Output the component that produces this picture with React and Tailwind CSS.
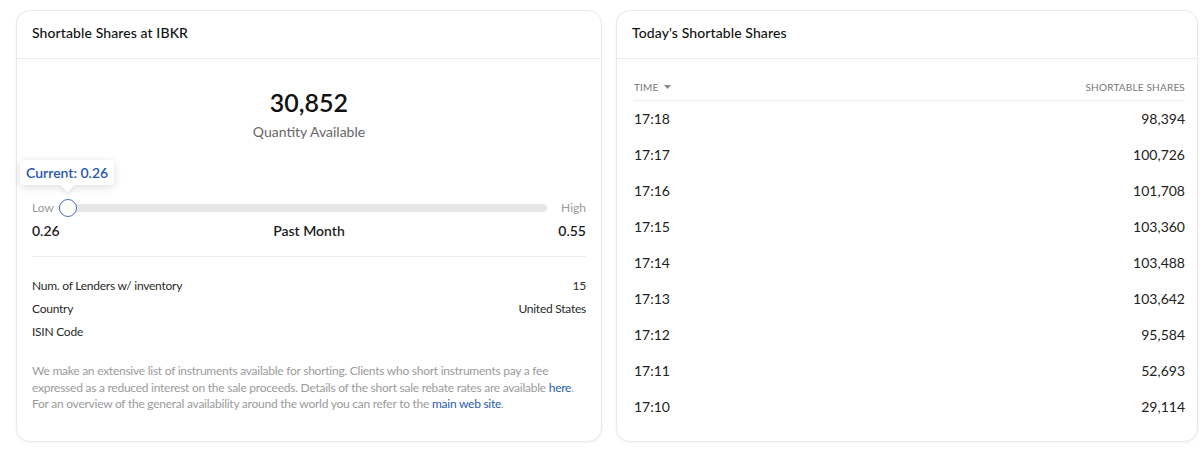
import React from "react";

const rows = [
  ["17:18", "98,394"],
  ["17:17", "100,726"],
  ["17:16", "101,708"],
  ["17:15", "103,360"],
  ["17:14", "103,488"],
  ["17:13", "103,642"],
  ["17:12", "95,584"],
  ["17:11", "52,693"],
  ["17:10", "29,114"],
];

const font = { fontFamily: "Lato, 'Open Sans', Arial, sans-serif" };

function Card({ title, className, children }) {
  return (
    <div
      className={`rounded-[14px] border border-[#e9e9e9] bg-white shadow-[0_1px_3px_rgba(0,0,0,0.05)] ${className}`}
    >
      <div className="h-[48px] border-b border-[#ececec] px-[15px] pb-[3px] flex items-center">
        <h2 className="text-[14px] font-medium text-[#111] leading-none tracking-[0.1px]">{title}</h2>
      </div>
      {children}
    </div>
  );
}

export default function App() {
  return (
    <div className="w-[1200px] h-[458px] bg-white overflow-hidden" style={font}>
      <div className="flex gap-[14px] pl-[16px] pt-[10px]">
        {/* availability card */}
        <Card title="Shortable Shares at IBKR" className="w-[586px] h-[432px]">
          <div className="px-[15px]">
            <div className="flex flex-col items-center pt-[28px]">
              <div className="text-[25px] font-semibold text-[#111] leading-[30px]">30,852</div>
              <div className="text-[14px] text-[#666] mt-[6px] leading-[18px]">Quantity Available</div>
            </div>

            {/* range slider with current-value tooltip */}
            <div className="relative mt-[58px]">
              <div className="absolute left-[-12px] top-[-39px] rounded-[4px] bg-white px-[6px] h-[25px] flex items-center shadow-[0_2px_8px_rgba(0,0,0,0.14)]">
                <span className="text-[14px] font-semibold text-[#1f57ad]">Current: 0.26</span>
                <span className="absolute left-[42px] bottom-[-5px] w-[11px] h-[11px] bg-white rotate-45 shadow-[3px_3px_4px_rgba(0,0,0,0.06)]"></span>
              </div>
              <div className="flex items-center h-[18px]">
                <span className="text-[12px] text-[#9a9a9a] w-[27px]">Low</span>
                <div className="relative flex-1 h-[8px] rounded-full bg-[#e6e6e6]">
                  <span className="absolute left-0 top-[-5px] w-[18px] h-[18px] rounded-full border border-[#4a6fbf] bg-white"></span>
                </div>
                <span className="text-[12px] text-[#9a9a9a] w-[39px] text-right">High</span>
              </div>
            </div>
            <div className="flex justify-between items-center mt-[4px] text-[14px] font-semibold text-[#1d1d1d] h-[18px]">
              <span>0.26</span>
              <span>Past Month</span>
              <span>0.55</span>
            </div>

            <div className="border-t border-[#ececec] mt-[17px]"></div>

            <div className="mt-[21px] flex flex-col gap-[7px] text-[12px] text-[#2a2a2a] tracking-[-0.25px]">
              <div className="flex justify-between h-[16px] items-center">
                <span>Num. of Lenders w/ inventory</span>
                <span>15</span>
              </div>
              <div className="flex justify-between h-[16px] items-center">
                <span>Country</span>
                <span>United States</span>
              </div>
              <div className="flex justify-between h-[16px] items-center">
                <span>ISIN Code</span>
                <span></span>
              </div>
            </div>

            <p className="mt-[23px] text-[12px] leading-[16.5px] text-[#9b9b9b] tracking-[-0.25px]">
              We make an extensive list of instruments available for shorting. Clients who short instruments pay a fee
              expressed as a reduced interest on the sale proceeds. Details of the short sale rebate rates are available{" "}
              <a className="text-[#2a5db0]">here</a>.<br />
              For an overview of the general availability around the world you can refer to the{" "}
              <a className="text-[#2a5db0]">main web site</a>.
            </p>
          </div>
        </Card>

        {/* intraday table card */}
        <Card title="Today's Shortable Shares" className="w-[582px] h-[432px]">
          <div className="pl-[17px] pr-[12px] pt-[19px]">
            <div className="flex justify-between items-center h-[23px] border-b border-[#ececec] pb-[4px] text-[10px] uppercase text-[#777] tracking-[0.2px]">
              <span className="flex items-center gap-[5px]">
                TIME
                <svg width="7" height="4" viewBox="0 0 7 4">
                  <path d="M0 0h7L3.5 4z" fill="#888" />
                </svg>
              </span>
              <span>Shortable Shares</span>
            </div>
            <div className="flex flex-col">
              {rows.map(([t, v]) => (
                <div key={t} className="flex justify-between items-center h-[35.9px] text-[14px] text-[#222]">
                  <span>{t}</span>
                  <span>{v}</span>
                </div>
              ))}
            </div>
          </div>
        </Card>
      </div>
    </div>
  );
}
